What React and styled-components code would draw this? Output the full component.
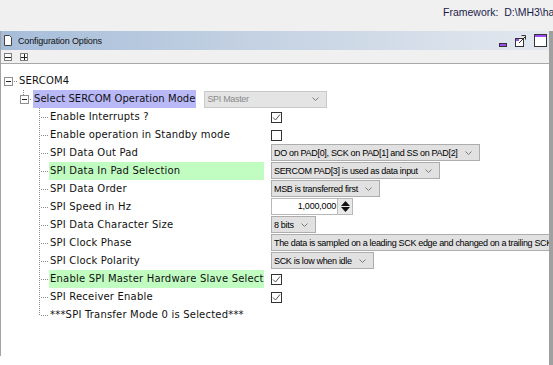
import React from 'react';
import styled, { createGlobalStyle } from 'styled-components';

const Global = createGlobalStyle`
  html, body { margin: 0; padding: 0; background: #f0f0f0; }
  body { width: 553px; height: 365px; overflow: hidden; font-family: "Liberation Sans", Arial, sans-serif; }
`;

const Screen = styled.div`
  display: flex;
  flex-direction: column;
  width: 553px;
  height: 365px;
`;

const TopBar = styled.div`
  height: 31px;
  flex: none;
  box-sizing: border-box;
  padding: 6px 0 0 443px;
  font-size: 10.5px;
  color: #1c1c4c;
  white-space: nowrap;
  overflow: hidden;
`;

const Panel = styled.div`
  flex: 1;
  display: flex;
  flex-direction: column;
  border-right: 4px solid #a0a0a0;
  min-height: 0;
  background: #fff;
`;

const Frame = styled.div`
  height: 325px;
  flex: none;
  display: flex;
  flex-direction: column;
  border-left: 1px solid #a3a3a3;
`;

const Footer = styled.div`
  flex: 1;
  background: #fff;
`;

const Header = styled.div`
  height: 19px;
  flex: none;
  display: flex;
  align-items: center;
  padding: 0 2px 0 3px;
  gap: 6px;
  background: linear-gradient(to right, #a6bdda 0%, #c3d1e2 45%, #e3e8ef 100%);
  font-size: 9px;
  letter-spacing: -0.15px;
  color: #111;
`;

const Title = styled.span`
  flex: 1;
`;

const WinButtons = styled.div`
  display: flex;
  align-items: center;
  gap: 7px;
`;

const Toolbar = styled.div`
  height: 13px;
  flex: none;
  display: flex;
  align-items: center;
  gap: 8px;
  padding-left: 3px;
  background: #f0f0f0;
`;

const ToolButton = styled.span`
  box-sizing: border-box;
  width: 8px;
  height: 8px;
  border: 1px solid #7d7d7d;
  background: #fafafa;
  display: inline-flex;
  align-items: center;
  justify-content: center;
`;

const TreeArea = styled.div`
  flex: 1;
  background: #fff;
  border-top: 1px solid #a8a8a8;
  padding-top: 8px;
  overflow: hidden;
`;

const Row = styled.div`
  display: grid;
  grid-template-columns: 263px minmax(0, 1fr);
  column-gap: 7px;
  height: 18px;
`;

const FlatRow = styled.div`
  display: flex;
  align-items: center;
  height: 18px;
  padding-left: ${p => p.$indent}px;
`;

const LabelCell = styled.div`
  display: flex;
  align-items: center;
  height: 18px;
  min-width: 0;
`;

const Label = styled.span`
  box-sizing: border-box;
  height: 18px;
  line-height: 18px;
  padding: 0 1px;
  flex: ${p => (p.$fill ? '1' : 'none')};
  background: ${p => p.$bg || 'transparent'};
  font-family: "DejaVu Sans", Verdana, sans-serif;
  font-size: 10px;
  letter-spacing: ${p => (p.$tight ? '0.05px' : '0.2px')};
  color: #111;
  white-space: nowrap;
  overflow: hidden;
`;

const Expander = styled.span`
  box-sizing: border-box;
  flex: none;
  width: 9px;
  height: 9px;
  border: 1px solid #8f8f8f;
  background: #fff;
  display: inline-flex;
  align-items: center;
  justify-content: center;
  &::after {
    content: "";
    width: 5px;
    height: 1px;
    background: #222;
  }
`;

const ValueCell = styled.div`
  display: flex;
  align-items: ${p => (p.$center ? 'center' : 'flex-start')};
  height: 18px;
  min-width: 0;
  overflow: hidden;
  font-size: 9px;
`;

const Dropdown = styled.span`
  box-sizing: border-box;
  flex: none;
  display: inline-flex;
  align-items: center;
  height: 17px;
  min-width: 42px;
  width: ${p => (p.$w ? `${p.$w}px` : 'auto')};
  margin-left: ${p => p.$gap || 0}px;
  padding: 0 7px 0 2px;
  gap: 7px;
  border: 1px solid ${p => (p.$disabled ? '#c9c9c9' : '#adadad')};
  background: ${p => (p.$disabled ? '#e4e4e4' : '#e1e1e1')};
  color: ${p => (p.$disabled ? '#8a8a8a' : '#000')};
  font-size: 9px;
  letter-spacing: -0.32px;
  white-space: nowrap;
`;

const DropText = styled.span`
  flex: 1;
`;

const Spinner = styled.span`
  box-sizing: border-box;
  display: inline-flex;
  align-items: stretch;
  width: 82px;
  height: 17px;
  border: 1px solid #b8b8b8;
  background: #fff;
`;

const SpinValue = styled.span`
  flex: 1;
  text-align: right;
  padding-right: 1px;
  line-height: 15px;
  font-size: 9px;
  letter-spacing: -0.2px;
`;

const SpinButtons = styled.span`
  width: 14px;
  display: flex;
  flex-direction: column;
  justify-content: center;
  align-items: center;
  gap: 1px;
  background: #e9e9e9;
  border-left: 1px solid #bcbcbc;
`;

const Check = styled.span`
  box-sizing: border-box;
  width: 11px;
  height: 11px;
  border: 1px solid #333;
  background: #fff;
  display: inline-flex;
  align-items: center;
  justify-content: center;
`;

const Chevron = () => (
  <svg width="7" height="4" viewBox="0 0 7 4">
    <polyline points="0.5,0.5 3.5,3.5 6.5,0.5" fill="none" stroke="#7a7a7a" strokeWidth="1" />
  </svg>
);

const Branch = ({ last }) => (
  <svg width="10" height="18" viewBox="0 0 10 18" style={{ flex: 'none', marginLeft: 38 }}>
    <line x1="0.5" y1="0" x2="0.5" y2={last ? 9 : 18} stroke="#8a8a8a" strokeDasharray="1 1" />
    <line x1="2" y1="9.5" x2="9" y2="9.5" stroke="#8a8a8a" strokeDasharray="1 1" />
  </svg>
);

const Select = ({ text, w, disabled, gap }) => (
  <Dropdown $w={w} $disabled={disabled} $gap={gap}>
    <DropText>{text}</DropText>
    <Chevron />
  </Dropdown>
);

const CheckBox = ({ checked }) => (
  <Check>
    {checked && (
      <svg width="9" height="9" viewBox="0 0 9 9">
        <polyline points="1,4.5 3.5,7 8,1.5" fill="none" stroke="#555" strokeWidth="1" />
      </svg>
    )}
  </Check>
);

const DocIcon = () => (
  <svg width="8" height="11" viewBox="0 0 8 11">
    <path d="M0.5,0.5 H5.5 L7.5,2.5 V10.5 H0.5 Z" fill="#fff" stroke="#444" />
  </svg>
);

const MinIcon = () => (
  <svg width="9" height="14" viewBox="0 0 9 14">
    <rect x="0.5" y="9.5" width="7" height="3" fill="#9b4df2" stroke="#333" />
  </svg>
);

const RestoreIcon = () => (
  <svg width="12" height="13" viewBox="0 0 12 13">
    <rect x="0.5" y="4.5" width="8" height="8" fill="#fff" stroke="#333" />
    <rect x="1" y="5" width="3" height="2" fill="#9b4df2" />
    <line x1="4" y1="9" x2="10.5" y2="2.5" stroke="#333" />
    <polyline points="6.5,1.5 10.5,1.5 10.5,5.5" fill="none" stroke="#333" />
  </svg>
);

const MaxIcon = () => (
  <svg width="13" height="13" viewBox="0 0 13 13">
    <rect x="0.5" y="0.5" width="12" height="12" fill="#fff" stroke="#333" />
    <rect x="1" y="1" width="11" height="2" fill="#9b4df2" />
  </svg>
);

const GREEN = '#c1fdc1';
const LAVENDER = '#b9b9f8';

const items = [
  { label: 'Enable Interrupts ?', value: <CheckBox checked />, center: true },
  { label: 'Enable operation in Standby mode', value: <CheckBox />, center: true },
  { label: 'SPI Data Out Pad', value: <Select text="DO on PAD[0], SCK on PAD[1] and SS on PAD[2]" /> },
  { label: 'SPI Data In Pad Selection', bg: GREEN, value: <Select text="SERCOM PAD[3] is used as data input" /> },
  { label: 'SPI Data Order', value: <Select text="MSB is transferred first" /> },
  {
    label: 'SPI Speed in Hz',
    value: (
      <Spinner>
        <SpinValue>1,000,000</SpinValue>
        <SpinButtons>
          <svg width="9" height="5" viewBox="0 0 9 5"><polygon points="0,5 4.5,0 9,5" fill="#111" /></svg>
          <svg width="9" height="5" viewBox="0 0 9 5"><polygon points="0,0 4.5,5 9,0" fill="#111" /></svg>
        </SpinButtons>
      </Spinner>
    ),
  },
  { label: 'SPI Data Character Size', value: <Select text="8 bits" /> },
  {
    label: 'SPI Clock Phase',
    value: <Select text="The data is sampled on a leading SCK edge and changed on a trailing SCK edge" />,
  },
  { label: 'SPI Clock Polarity', value: <Select text="SCK is low when idle" /> },
  { label: 'Enable SPI Master Hardware Slave Select', bg: GREEN, value: <CheckBox checked />, center: true },
  { label: 'SPI Receiver Enable', value: <CheckBox checked />, center: true },
  { label: '***SPI Transfer Mode 0 is Selected***', last: true },
];

export default function App() {
  return (
    <Screen>
      <Global />
      <TopBar>Framework:&nbsp; D:\MH3\harmony</TopBar>
      <Panel>
        <Frame>
          <Header>
            <DocIcon />
            <Title>Configuration Options</Title>
            <WinButtons>
              <MinIcon />
              <RestoreIcon />
              <MaxIcon />
            </WinButtons>
          </Header>
          <Toolbar>
            <ToolButton>
              <svg width="6" height="6" viewBox="0 0 6 6"><line x1="0" y1="3.5" x2="6" y2="3.5" stroke="#222" /></svg>
            </ToolButton>
            <ToolButton>
              <svg width="6" height="6" viewBox="0 0 6 6">
                <line x1="0" y1="3.5" x2="6" y2="3.5" stroke="#222" />
                <line x1="3.5" y1="0" x2="3.5" y2="6" stroke="#222" />
              </svg>
            </ToolButton>
          </Toolbar>
          <TreeArea>
            <FlatRow $indent={3}>
              <Expander />
              <svg width="5" height="18" viewBox="0 0 5 18" style={{ flex: 'none' }}>
                <line x1="1" y1="9.5" x2="4" y2="9.5" stroke="#8a8a8a" strokeDasharray="1 1" />
              </svg>
              <Label>SERCOM4</Label>
            </FlatRow>
            <FlatRow $indent={19}>
              <svg width="9" height="18" viewBox="0 0 9 18" style={{ flex: 'none', marginRight: -9 }}>
                <line x1="3.5" y1="0" x2="3.5" y2="5" stroke="#8a8a8a" strokeDasharray="1 1" />
              </svg>
              <Expander />
              <svg width="4" height="18" viewBox="0 0 4 18" style={{ flex: 'none' }}>
                <line x1="1" y1="9.5" x2="3" y2="9.5" stroke="#8a8a8a" strokeDasharray="1 1" />
              </svg>
              <Label $bg={LAVENDER} $tight>Select SERCOM Operation Mode</Label>
              <Select text="SPI Master" w={123} disabled gap={8} />
            </FlatRow>
            {items.map(it => (
              <Row key={it.label}>
                <LabelCell>
                  <Branch last={it.last} />
                  <Label $fill $bg={it.bg}>{it.label}</Label>
                </LabelCell>
                <ValueCell $center={it.center}>{it.value}</ValueCell>
              </Row>
            ))}
          </TreeArea>
        </Frame>
        <Footer />
      </Panel>
    </Screen>
  );
}
